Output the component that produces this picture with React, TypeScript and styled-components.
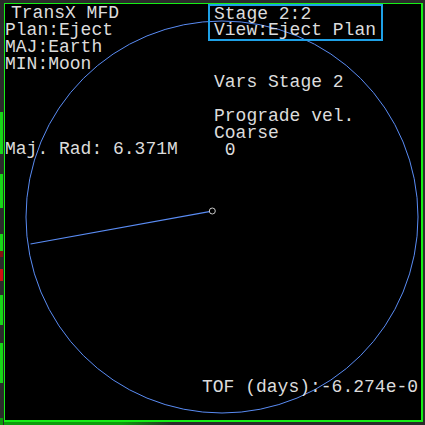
import React from "react";
import styled, { createGlobalStyle } from "styled-components";

const Global = createGlobalStyle`
  html, body { margin: 0; padding: 0; background: #2b2b2b; }
  #root { width: 425px; height: 425px; }
`;

const Frame = styled.div`
  width: 425px;
  height: 425px;
  display: grid;
  grid-template-columns: 4px 419px 2px;
  grid-template-rows: 3px 419px 3px;
  background: #2b2b2b;
  overflow: hidden;
`;

const SideStrip = styled.div`
  grid-column: 1;
  grid-row: 1 / 4;
  display: flex;
  flex-direction: column;
  background: #2a2a2a;
`;

const Segment = styled.div<{ $h: number; $c: string }>`
  height: ${(p) => p.$h}px;
  width: 3px;
  background: ${(p) => p.$c};
  flex: none;
`;

const BottomStrip = styled.div`
  grid-column: 2 / 4;
  grid-row: 3;
  background: linear-gradient(90deg, #0d9c0d 0%, #0d9c0d 28%, #2b2b2b 40%);
`;

const Screen = styled.div`
  grid-column: 2;
  grid-row: 2;
  position: relative;
  box-sizing: border-box;
  border-style: solid;
  border-color: #16ee16;
  border-width: 1px 2px 2px 1px;
  background: #000;
  overflow: hidden;
  display: flex;
  flex-direction: column;
  font-family: "Liberation Mono", "Courier New", monospace;
  font-size: 18px;
  color: #dcdcdc;
  white-space: pre;
`;

const Drawing = styled.svg`
  position: absolute;
  left: 0;
  top: 0;
  z-index: 0;
`;

const Columns = styled.div`
  position: relative;
  z-index: 1;
  display: grid;
  grid-template-columns: 203px 1fr;
  padding-top: 1px;
  padding-left: 0px;
`;

const Column = styled.div`
  display: flex;
  flex-direction: column;
`;

const Line = styled.div<{ $indent?: number }>`
  height: 17px;
  line-height: 17px;
  padding-left: ${(p) => p.$indent ?? 0}px;
`;

const StageBox = styled.div`
  align-self: flex-start;
  margin-top: -1px;
  margin-bottom: -1px;
  border: 2px solid #1ea0e6;
  padding: 0 5px 1px 4px;
`;

const BoxLine = styled.div`
  height: 16px;
  line-height: 16px;
`;

const Footer = styled.div`
  position: relative;
  z-index: 1;
  margin-top: auto;
  margin-bottom: 24px;
  padding-left: 197px;
  height: 17px;
  line-height: 17px;
`;

const blue = "#5a8cf4";

export default function App() {
  return (
    <>
      <Global />
      <Frame>
        <SideStrip>
          <Segment $h={112} $c="#2a2a2a" />
          <Segment $h={42} $c="#16d816" />
          <Segment $h={20} $c="#2a2a2a" />
          <Segment $h={34} $c="#16d816" />
          <Segment $h={26} $c="#2a2a2a" />
          <Segment $h={17} $c="#16d816" />
          <Segment $h={6} $c="#8a1010" />
          <Segment $h={12} $c="#2a2a2a" />
          <Segment $h={12} $c="#d01010" />
          <Segment $h={14} $c="#2a2a2a" />
          <Segment $h={30} $c="#16d816" />
          <Segment $h={18} $c="#2a2a2a" />
          <Segment $h={40} $c="#16d816" />
          <Segment $h={35} $c="#2a2a2a" />
          <Segment $h={7} $c="#0d9c0d" />
        </SideStrip>
        <Screen>
          <Drawing width={416} height={416} viewBox="5 4 416 416">
            <circle cx={222} cy={217} r={196} fill="none" stroke={blue} strokeWidth={1} />
            <line x1={30.5} y1={244} x2={209.3} y2={211.6} stroke={blue} strokeWidth={1.2} />
            <circle cx={212.3} cy={211} r={3} fill="none" stroke="#c8c8c8" strokeWidth={1} />
          </Drawing>
          <Columns>
            <Column>
              <Line $indent={6}>TransX MFD</Line>
              <Line>Plan:Eject</Line>
              <Line>MAJ:Earth</Line>
              <Line>MIN:Moon</Line>
              <Line />
              <Line />
              <Line />
              <Line />
              <Line>Maj. Rad: 6.371M</Line>
            </Column>
            <Column>
              <StageBox>
                <BoxLine>Stage 2:2</BoxLine>
                <BoxLine>View:Eject Plan</BoxLine>
              </StageBox>
              <Line />
              <Line />
              <Line $indent={6}>Vars Stage 2</Line>
              <Line />
              <Line $indent={6}>Prograde vel.</Line>
              <Line $indent={6}>Coarse</Line>
              <Line $indent={6}> 0</Line>
            </Column>
          </Columns>
          <Footer>TOF (days):-6.274e-0</Footer>
        </Screen>
        <BottomStrip />
      </Frame>
    </>
  );
}
